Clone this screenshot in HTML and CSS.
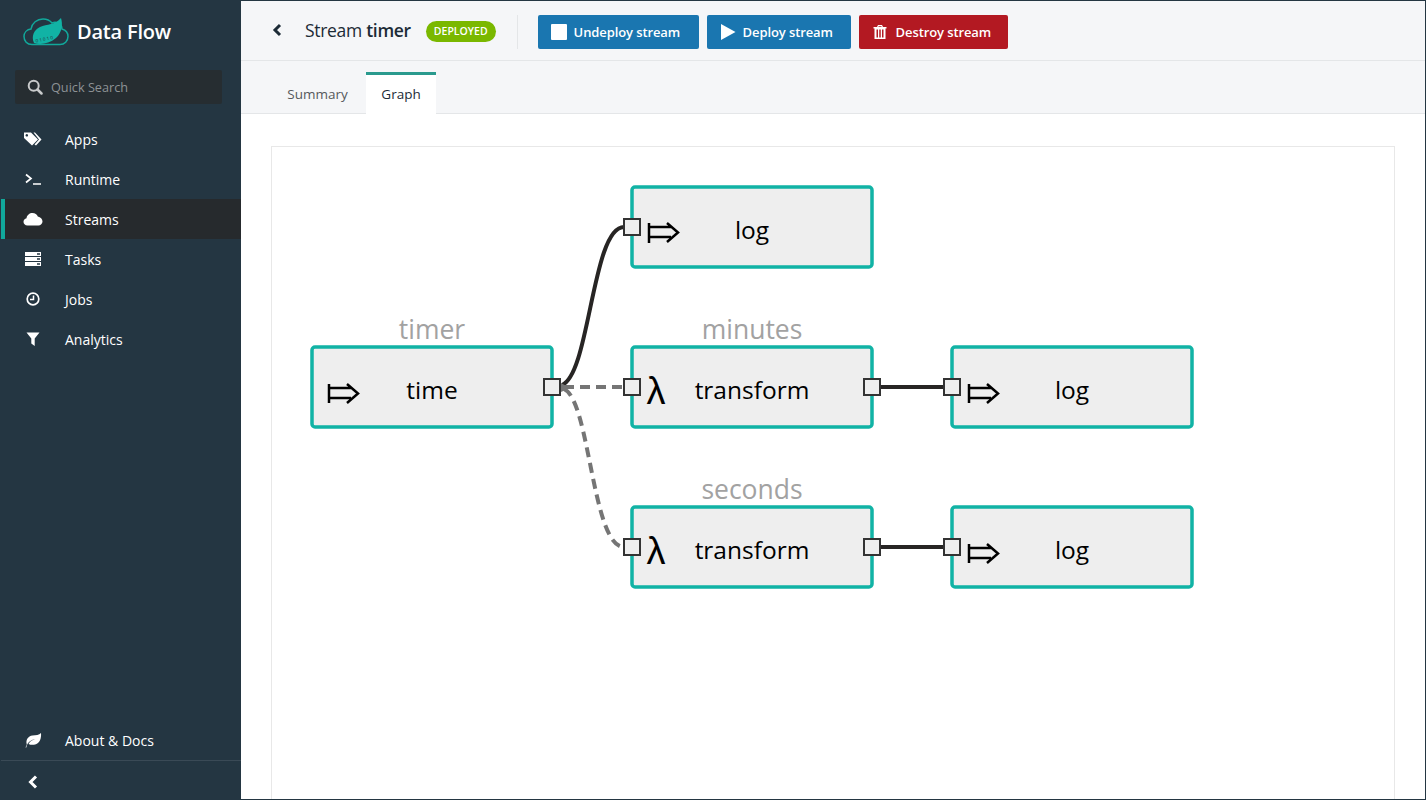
FILE: index.html
```html
<!DOCTYPE html>
<html lang="en">
<head>
<meta charset="utf-8">
<title>Data Flow - Stream timer</title>
<link rel="stylesheet" href="styles.css">
</head>
<body>
<div class="app">
  <aside class="sidebar">
    <div class="brand">
      <svg class="logo" width="46" height="32" viewBox="0 0 46 32">
        <path class="logo-cloud" d="M9 29.500C4 29.500 1 26 1 21.500C1 17.500 4 14.500 8 14C9 8 14 4 20 4C24 4 27 5.500 29 8C31 7 33 7 35 8C38 9.500 39 12 39 14C42.500 15 45 18 45 21.500C45 26 41.500 29.500 37 29.500Z"/>
        <path class="logo-leaf" d="M11 28C8 21 11 15 17 12C24 9 32 10 38 3C40 9 39 18 33 23C26 29 17 30 11 28Z"/>
        <text class="logo-bits" x="13" y="27.500" transform="rotate(-12 13 27.500)">0 1 0 1 0</text>
      </svg>
      <span class="brand-name">Data Flow</span>
    </div>
    <div class="search">
      <svg width="16" height="16" viewBox="0 0 16 16"><circle class="search-ring" cx="6.700" cy="6.700" r="5"/><path class="search-handle" d="M10.500 10.500L14.500 14.500"/></svg>
      <span>Quick Search</span>
    </div>
    <nav class="nav">
      <a class="nav-item">
        <svg class="nav-icon" width="20" height="16" viewBox="0 0 20 16"><path d="M1 1.500H8L15 8.500L9 14.500L1 7Z M3.800 3a1.300 1.300 0 1 0 .01 0Z" fill-rule="evenodd"/><path d="M10.500 1.500H12L18.500 8.500L13 14.500L11.500 13.500L16 8.500Z"/></svg>
        <span>Apps</span>
      </a>
      <a class="nav-item">
        <svg class="nav-icon" width="20" height="16" viewBox="0 0 20 16"><path class="stroke-icon" d="M3 3.500L8 7.500L3 11.500M10 13H18"/></svg>
        <span>Runtime</span>
      </a>
      <a class="nav-item active">
        <svg class="nav-icon" width="20" height="16" viewBox="0 0 20 16"><path d="M4.500 14.500C2 14.500 .5 12.800 .5 10.800C.5 9 1.800 7.500 3.500 7.200C4 4 6.500 2 9.500 2C12 2 14 3.500 14.800 5.500C17.500 6 19.500 8 19.500 10.500C19.500 12.800 17.500 14.500 15.500 14.500Z"/></svg>
        <span>Streams</span>
      </a>
      <a class="nav-item">
        <svg class="nav-icon" width="20" height="16" viewBox="0 0 20 16"><path fill-rule="evenodd" d="M2 1H18V5H2Z M14 2.300V3.700H17V2.300Z M2 6H18V10H2Z M14 7.300V8.700H17V7.300Z M2 11H18V15H2Z M14 12.300V13.700H17V12.300Z"/></svg>
        <span>Tasks</span>
      </a>
      <a class="nav-item">
        <svg class="nav-icon" width="20" height="16" viewBox="0 0 20 16"><circle class="stroke-icon" cx="10" cy="8" r="5.800"/><path class="stroke-thin" d="M10.500 4.500V8.500H7"/></svg>
        <span>Jobs</span>
      </a>
      <a class="nav-item">
        <svg class="nav-icon" width="20" height="16" viewBox="0 0 20 16"><path d="M3.500 1.500H16.500L11.700 7.500V15L8.300 12.500V7.500Z"/></svg>
        <span>Analytics</span>
      </a>
    </nav>
    <div class="side-bottom">
      <a class="nav-item">
        <svg class="nav-icon" width="20" height="16" viewBox="0 0 20 16"><path fill-rule="evenodd" d="M2.500 15.500L3.800 12.500C2.500 8 5 4 9.500 3.500C13 3.200 16 3 18 1C18.500 6 17 12 11 12.800C9 13 7 12.800 5.500 12C6.500 9.800 9 8 12 7.500C9 7.500 5.500 9.200 3.800 13.500L3.300 15.500Z"/></svg>
        <span>About &amp; Docs</span>
      </a>
      <div class="collapse">
        <svg width="12" height="14" viewBox="0 0 12 14"><path class="chevron" d="M9 1.500L3.500 7L9 12.500"/></svg>
      </div>
    </div>
  </aside>
  <main class="main">
    <header class="topbar">
      <svg class="back" width="12" height="14" viewBox="0 0 12 14"><path class="chevron dark" d="M9 2L4 7L9 12"/></svg>
      <h1 class="title">Stream <strong>timer</strong></h1>
      <span class="badge">DEPLOYED</span>
      <span class="divider"></span>
      <button class="btn blue undeploy"><svg width="16" height="16" viewBox="0 0 16 16"><rect width="16" height="16" rx="1"/></svg>Undeploy stream</button>
      <button class="btn blue deploy"><svg width="16" height="16" viewBox="0 0 16 16"><path d="M1 0L15.500 8L1 16Z"/></svg>Deploy stream</button>
      <button class="btn red destroy"><svg width="16" height="16" viewBox="0 0 16 16"><path fill-rule="evenodd" d="M1.500 3H5L6 1H10L11 3H14.500V4.500H13.500V15H2.500V4.500H1.500Z M6.700 2.200L6.300 3H9.700L9.300 2.200Z M4.500 5.500V13.500H6V5.500Z M7.250 5.500V13.500H8.750V5.500Z M10 5.500V13.500H11.500V5.500Z"/></svg>Destroy stream</button>
    </header>
    <div class="tabs">
      <a class="tab">Summary</a>
      <a class="tab current">Graph</a>
    </div>
    <section class="content">
      <div class="card">
        <svg class="graph" width="1124" height="654" viewBox="271 146 1124 654">
          <path class="edge" d="M562 385C590 374 592 227 624 227"/>
          <path class="edge dashed" d="M564 387H624"/>
          <path class="edge dashed" d="M564 389C590 400 592 547 624 547"/>
          <path class="edge-head" d="M561 383L570 388L561 392Z"/>
          <path class="edge" d="M880 387H944"/>
          <path class="edge" d="M880 547H944"/>

          <rect class="node" x="632" y="187" width="240" height="80" rx="3"/>
          <rect class="node" x="312" y="347" width="240" height="80" rx="3"/>
          <rect class="node" x="632" y="347" width="240" height="80" rx="3"/>
          <rect class="node" x="952" y="347" width="240" height="80" rx="3"/>
          <rect class="node" x="632" y="507" width="240" height="80" rx="3"/>
          <rect class="node" x="952" y="507" width="240" height="80" rx="3"/>

          <text class="label" x="432" y="339">timer</text>
          <text class="label" x="752" y="339">minutes</text>
          <text class="label" x="752" y="499">seconds</text>

          <text class="name" x="752" y="239">log</text>
          <text class="name" x="432" y="399">time</text>
          <text class="name" x="752" y="399">transform</text>
          <text class="name" x="1072" y="399">log</text>
          <text class="name" x="752" y="559">transform</text>
          <text class="name" x="1072" y="559">log</text>

          <text class="lambda" x="656" y="404">λ</text>
          <text class="lambda" x="656" y="564">λ</text>

          <path class="source" d="M649 223V243M649 227H671M649 237H671M667 223L678 232.500L667 242"/>
          <path class="source" d="M329 384V403M329 388H351M329 398H351M347 384L358 393.500L347 403"/>
          <path class="source" d="M969 384V403M969 388H991M969 398H991M987 384L998 393.500L987 403"/>
          <path class="source" d="M969 544V563M969 548H991M969 558H991M987 544L998 553.500L987 563"/>

          <rect class="port" x="624" y="219" width="16" height="16"/>
          <rect class="port" x="544" y="379" width="16" height="16"/>
          <rect class="port" x="624" y="379" width="16" height="16"/>
          <rect class="port" x="864" y="379" width="16" height="16"/>
          <rect class="port" x="944" y="379" width="16" height="16"/>
          <rect class="port" x="624" y="539" width="16" height="16"/>
          <rect class="port" x="864" y="539" width="16" height="16"/>
          <rect class="port" x="944" y="539" width="16" height="16"/>
        </svg>
      </div>
    </section>
  </main>
</div>
</body>
</html>
```
FILE: styles.css
```css
* { box-sizing: border-box; }
html, body { margin: 0; height: 100%; overflow: hidden; }
body { font-family: "Open Sans", "Liberation Sans", sans-serif; background: #243642; }
.app { display: flex; height: 800px; padding: 1px 1px 1px 0; }

.sidebar { width: 241px; flex: none; display: flex; flex-direction: column; background: #243642; color: #fff; padding-left: 1px; }
.brand { display: flex; align-items: center; gap: 8px; height: 60px; padding: 0 0 0 22px; }
.brand-name { font-size: 20px; font-weight: 600; letter-spacing: -0.2px; }
.logo-cloud { fill: none; stroke: #11a89b; stroke-width: 1.500; }
.logo-leaf { fill: #11b3a5; }
.logo-bits { font-size: 4.500px; fill: #243642; }
.search { display: flex; align-items: center; gap: 8px; width: 207px; height: 34px; margin: 9px 0 0 14px; padding-left: 12px; background: #262d31; border-radius: 2px; color: #8d9295; font-size: 12.700px; }
.search-ring { fill: none; stroke: #c8cacb; stroke-width: 2; }
.search-handle { fill: none; stroke: #c8cacb; stroke-width: 2.500; stroke-linecap: round; }
.nav { margin-top: 15px; flex: 1; }
.nav-item { display: flex; align-items: center; height: 40px; padding-left: 18px; border-left: 4px solid transparent; font-size: 14px; font-weight: 500; color: #fff; gap: 22px; }
.nav-item.active { background: #262a2d; border-left-color: #11a89b; }
.nav-icon { fill: #fff; flex: none; }
.stroke-icon { fill: none; stroke: #fff; stroke-width: 1.700; }
.stroke-thin { fill: none; stroke: #fff; stroke-width: 1.500; }
.side-bottom { display: flex; flex-direction: column; }
.collapse { display: flex; align-items: center; height: 39px; padding: 3px 0 0 26px; border-top: 1px solid #3a4a56; }
.chevron { fill: none; stroke: #fff; stroke-width: 3; }
.chevron.dark { stroke: #1c2b36; }

.main { flex: 1; min-width: 0; display: flex; flex-direction: column; background: #fff; }
.topbar { display: flex; align-items: center; height: 60px; padding: 3px 0 0 30px; background: #f5f6f8; border-bottom: 1px solid #e4e6e8; }
.back { flex: none; margin: -5px 4px 0 0; }
.title { margin: -5px 0 0 18px; font-size: 17.500px; font-weight: 400; color: #1c2b36; letter-spacing: -0.3px; white-space: nowrap; }
.title strong { font-weight: 600; }
.badge { margin: -2px 0 0 15px; height: 21px; padding: 0 8px; display: flex; align-items: center; background: #7ab800; border-radius: 11px; color: #fff; font-size: 10.500px; font-weight: 600; }
.divider { width: 1px; height: 34px; margin: -1px 20px 0 21px; background: #e4e6e8; }
.btn { display: flex; align-items: center; gap: 7px; height: 34px; margin-right: 8px; padding: 0 0 0 12px; border: 1px solid transparent; border-radius: 2px; color: #fff; font: 600 13px "Open Sans", "Liberation Sans", sans-serif; letter-spacing: -0.1px; white-space: nowrap; }
.btn svg { fill: #fff; flex: none; }
.blue { background: #1a76b0; }
.red { background: #b31922; }
.undeploy { width: 161px; }
.deploy { width: 144px; }
.destroy { width: 149px; }
.destroy svg { margin-right: 1px; }

.tabs { display: flex; height: 53px; padding: 11px 0 0 30px; background: #f5f6f8; border-bottom: 1px solid #e4e6e8; font-size: 13.500px; }
.tab { display: flex; align-items: center; justify-content: center; height: 42px; color: #55595c; padding-top: 2px; }
.tab:first-child { width: 95px; padding-right: 2px; }
.tab.current { width: 70px; padding: 0 0 2px; background: #fff; border-top: 3px solid #2a9a8e; color: #1c2b36; }

.content { flex: 1; min-height: 0; padding: 32px 30px 0; }
.card { height: 100%; border: 1px solid #e8e8e8; border-bottom: 0; overflow: hidden; }
.graph { display: block; margin: -1px 0 0 -1px; font-family: "Open Sans", "Liberation Sans", sans-serif; }
.node { fill: #eee; stroke: #11b3a5; stroke-width: 3.500; }
.port { fill: #eee; stroke: #333; stroke-width: 2; }
.edge { fill: none; stroke: #272524; stroke-width: 4; }
.edge.dashed { stroke: #757575; stroke-dasharray: 10 6; }
.edge-head { fill: #757575; }
.source { fill: none; stroke: #000; stroke-width: 2.500; }
.label { font-size: 26.500px; fill: #a2a2a2; text-anchor: middle; }
.name { font-size: 24.500px; fill: #000; text-anchor: middle; }
.lambda { font-family: "Liberation Sans", sans-serif; font-size: 38px; fill: #000; text-anchor: middle; }
```
